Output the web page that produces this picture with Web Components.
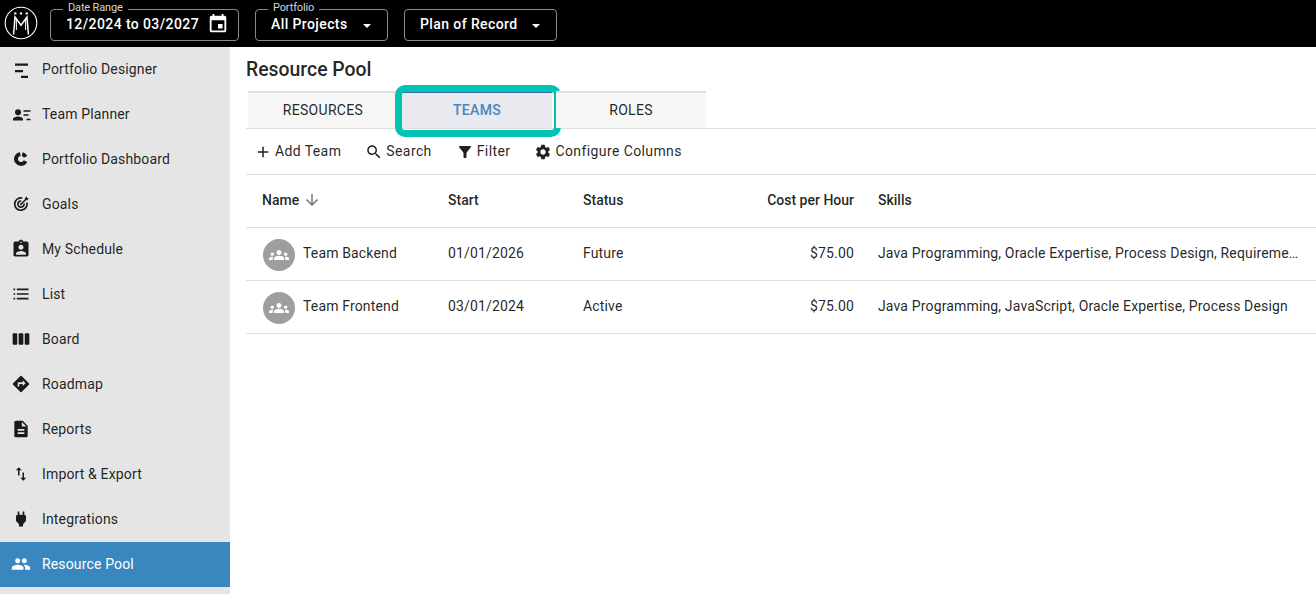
<!DOCTYPE html>
<html lang="en"><head><meta charset="utf-8"><title>Resource Pool</title>
<style>
html,body{margin:0;padding:0;height:594px;overflow:hidden;background:#fff;font-family:Roboto,"Liberation Sans",sans-serif;font-size:14px;color:rgba(0,0,0,.87)}
</style></head><body>
<app-shell>
  <app-header slot="header">
    <field-box label="Date Range" w="189" pr="9.5"><span>12/2024 to 03/2027</span><rp-icon name="event" size="22" slot="end"></rp-icon></field-box>
    <field-box label="Portfolio" w="133" pr="16"><span>All Projects</span><caret-icon slot="end"></caret-icon></field-box>
    <field-box w="153" pr="16"><span>Plan of Record</span><caret-icon slot="end"></caret-icon></field-box>
  </app-header>
  <side-nav slot="nav">
    <nav-item icon="designer" size="24">Portfolio Designer</nav-item>
    <nav-item icon="planner" size="24">Team Planner</nav-item>
    <nav-item icon="donut" size="24">Portfolio Dashboard</nav-item>
    <nav-item icon="goals" size="24">Goals</nav-item>
    <nav-item icon="assign" size="20">My Schedule</nav-item>
    <nav-item icon="list" size="20">List</nav-item>
    <nav-item icon="week" size="20">Board</nav-item>
    <nav-item icon="directions" size="20">Roadmap</nav-item>
    <nav-item icon="description" size="20">Reports</nav-item>
    <nav-item icon="swap" size="18">Import &amp; Export</nav-item>
    <nav-item icon="power" size="20">Integrations</nav-item>
    <nav-item icon="people" size="20" active>Resource Pool</nav-item>
  </side-nav>
  <pool-page slot="main">
    <tab-bar>
      <tab-item>RESOURCES</tab-item>
      <tab-item active>TEAMS</tab-item>
      <tab-item>ROLES</tab-item>
    </tab-bar>
    <tool-bar>
      <tool-btn icon="add">Add Team</tool-btn>
      <tool-btn icon="search">Search</tool-btn>
      <tool-btn icon="filter">Filter</tool-btn>
      <tool-btn icon="settings">Configure Columns</tool-btn>
    </tool-bar>
    <team-table>
      <team-row head>
        <span slot="name" class="n">Name <rp-icon name="down" size="18" color="#757575"></rp-icon></span>
        <span slot="start">Start</span><span slot="status">Status</span><span slot="cost">Cost per Hour</span><span slot="skills">Skills</span>
      </team-row>
      <team-row avatar>
        <span slot="name">Team Backend</span><span slot="start">01/01/2026</span><span slot="status">Future</span><span slot="cost">$75.00</span><span slot="skills">Java Programming, Oracle Expertise, Process Design, Requirements Engineering</span>
      </team-row>
      <team-row avatar>
        <span slot="name">Team Frontend</span><span slot="start">03/01/2024</span><span slot="status">Active</span><span slot="cost">$75.00</span><span slot="skills">Java Programming, JavaScript, Oracle Expertise, Process Design</span>
      </team-row>
    </team-table>
  </pool-page>
</app-shell>
<script>
const P={
event:'<path d="M17 12h-5v5h5v-5zM16 1v2H8V1H6v2H5c-1.11 0-1.99.9-1.99 2L3 19c0 1.1.89 2 2 2h14c1.1 0 2-.9 2-2V5c0-1.1-.9-2-2-2h-1V1h-2zm3 18H5V8h14v11z"/>',
designer:'<path d="M6 6.600h13v2.200H6zM6 13h8v2.200H6zM12 18.700h7v2.200h-7z"/>',
planner:'<circle cx="9" cy="10.300" r="3"/><path d="M4 18.500v-1.200c0-1.800 3.200-2.800 5-2.800s5 1 5 2.800v1.200zM14.500 8.300h7v1.500h-7zM14.500 12.300h5v1.500h-5zM17.500 16.800h4v1.500h-4z"/>',
donut:'<g fill="none" stroke="currentColor" stroke-width="3.800"><path d="M16.530 14.110A5 5 0 1 1 11.300 7.050"/><path d="M13.200 7.150A5 5 0 0 1 16.530 9.890"/></g>',
goals:'<g fill="none" stroke="currentColor" stroke-width="1.700"><path d="M17.900 10.400A6.200 6.200 0 1 1 13.300 6"/><path d="M15 11.500A3.100 3.100 0 1 1 12.300 9"/><path d="M12 12.200 17.200 7" stroke-width="1.500"/></g><path d="M15.700 6.500 17.700 4.300l.4 1.700 1.800.4-2.200 2z"/><circle cx="12" cy="12.200" r="1"/>',
assign:'<path d="M19 3h-4.180C14.400 1.840 13.300 1 12 1c-1.300 0-2.400.84-2.820 2H5c-1.100 0-2 .9-2 2v14c0 1.100.9 2 2 2h14c1.100 0 2-.9 2-2V5c0-1.100-.9-2-2-2zm-7 0c.55 0 1 .45 1 1s-.45 1-1 1-1-.45-1-1 .45-1 1-1zm0 4c1.660 0 3 1.340 3 3s-1.340 3-3 3-3-1.340-3-3 1.340-3 3-3zm6 12H6v-1.400c0-2 4-3.100 6-3.100s6 1.100 6 3.100V19z"/>',
list:'<path d="M3 5.500h2v2H3zM3 11h2v2H3zM3 16.500h2v2H3zM7 5.500h14v2H7zM7 11h14v2H7zM7 16.500h14v2H7z"/>',
week:'<rect x="2" y="5" width="5.500" height="14" rx="1.200"/><rect x="9.200" y="5" width="5.600" height="14" rx="1.200"/><rect x="16.500" y="5" width="5.500" height="14" rx="1.200"/>',
directions:'<path d="M21.710 11.290l-9-9c-.39-.39-1.020-.39-1.410 0l-9 9c-.39.39-.39 1.020 0 1.410l9 9c.39.39 1.020.39 1.410 0l9-9c.39-.38.39-1.010 0-1.410zM14 14.500V12h-4v3H8v-4c0-.55.45-1 1-1h5V7.500l3.500 3.500-3.500 3.500z"/>',
description:'<path d="M14 2H6c-1.100 0-1.990.9-1.990 2L4 20c0 1.100.89 2 2 2h12c1.100 0 2-.9 2-2V8l-6-6zm2 16H8v-2h8v2zm0-4H8v-2h8v2zm-3-5V3.500L18.500 9H13z"/>',
swap:'<path d="M9 3L5 6.990h3V14h2V6.990h3L9 3zm7 14.010V10h-2v7.010h-3L15 21l4-3.990h-3z"/>',
power:'<path d="M16.010 7L16 3h-2v4h-4V3H8v4h-.01C7 6.990 6 7.990 6 8.990v5.490L9.500 18v3h5v-3l3.500-3.510v-5.500c0-1-1-2-1.990-1.990z"/>',
people:'<path d="M16 11c1.660 0 2.990-1.340 2.990-3S17.660 5 16 5c-1.660 0-3 1.340-3 3s1.340 3 3 3zm-8 0c1.660 0 2.990-1.340 2.990-3S9.660 5 8 5C6.340 5 5 6.340 5 8s1.340 3 3 3zm0 2c-2.330 0-7 1.170-7 3.500V19h14v-2.500c0-2.330-4.670-3.500-7-3.500zm8 0c-.29 0-.62.02-.97.05 1.160.84 1.970 1.970 1.970 3.450V19h6v-2.500c0-2.330-4.670-3.500-7-3.500z"/>',
groups:'<path d="M12 12.750c1.630 0 3.070.39 4.240.9 1.080.48 1.760 1.560 1.760 2.730V18H6v-1.610c0-1.180.68-2.260 1.760-2.730 1.170-.52 2.610-.91 4.240-.91zM4 13c1.100 0 2-.9 2-2s-.9-2-2-2-2 .9-2 2 .9 2 2 2zm1.130 1.100c-.37-.06-.74-.1-1.130-.1-.99 0-1.930.21-2.780.58C.48 14.900 0 15.620 0 16.430V18h4.500v-1.610c0-.83.23-1.610.63-2.290zM20 13c1.100 0 2-.9 2-2s-.9-2-2-2-2 .9-2 2 .9 2 2 2zm4 3.430c0-.81-.48-1.530-1.220-1.850-.85-.37-1.790-.58-2.780-.58-.39 0-.76.04-1.130.1.4.68.63 1.460.63 2.290V18H24v-1.570zM12 6c1.660 0 3 1.340 3 3s-1.340 3-3 3-3-1.340-3-3 1.340-3 3-3z"/>',
add:'<path d="M19 13h-6v6h-2v-6H5v-2h6V5h2v6h6v2z"/>',
search:'<path d="M15.500 14h-.79l-.28-.27C15.410 12.590 16 11.110 16 9.500 16 5.910 13.090 3 9.500 3S3 5.910 3 9.500 5.910 16 9.500 16c1.610 0 3.090-.59 4.230-1.570l.27.28v.79l5 4.990L20.490 19l-4.990-5zm-6 0C7.010 14 5 11.990 5 9.500S7.010 5 9.500 5 14 7.010 14 9.500 11.990 14 9.500 14z"/>',
filter:'<path d="M4.250 5.610C6.270 8.200 10 13 10 13v6c0 .55.45 1 1 1h2c.55 0 1-.45 1-1v-6s3.720-4.800 5.740-7.390c.51-.66.04-1.610-.79-1.610H5.040c-.83 0-1.300.95-.79 1.610z"/>',
settings:'<path d="M19.140 12.940c.04-.3.06-.61.06-.94 0-.32-.02-.64-.07-.94l2.030-1.580c.18-.14.23-.41.12-.61l-1.920-3.320c-.12-.22-.37-.29-.59-.22l-2.390.96c-.5-.38-1.030-.7-1.620-.94l-.36-2.540c-.04-.24-.24-.41-.48-.41h-3.840c-.24 0-.43.17-.47.41l-.36 2.540c-.59.24-1.130.57-1.620.94l-2.390-.96c-.22-.08-.47 0-.59.22L2.740 8.870c-.12.21-.08.47.12.61l2.030 1.580c-.05.3-.09.63-.09.94s.02.64.07.94l-2.030 1.580c-.18.14-.23.41-.12.61l1.920 3.320c.12.22.37.29.59.22l2.390-.96c.5.38 1.030.7 1.620.94l.36 2.540c.05.24.24.41.48.41h3.840c.24 0 .44-.17.47-.41l.36-2.540c.59-.24 1.130-.56 1.620-.94l2.390.96c.22.08.47 0 .59-.22l1.920-3.320c.12-.22.07-.47-.12-.61l-2.010-1.580zM12 15.600c-1.980 0-3.600-1.620-3.600-3.600s1.620-3.600 3.600-3.600 3.600 1.620 3.600 3.600-1.620 3.600-3.600 3.600z"/>',
down:'<path d="M20 12l-1.410-1.410L13 16.170V4h-2v12.170l-5.580-5.590L4 12l8 8 8-8z"/>'
};
function def(tag,html,init){customElements.define(tag,class extends HTMLElement{constructor(){super();this.attachShadow({mode:'open'})}connectedCallback(){this.shadowRoot.innerHTML=typeof html==='function'?html(this):html;init&&init(this)}})}
class RpIcon extends HTMLElement{connectedCallback(){const s=this.getAttribute('size')||20,c=this.getAttribute('color')||'currentColor';
 if(!this.shadowRoot)this.attachShadow({mode:'open'});
 this.shadowRoot.innerHTML=`<style>:host{display:inline-flex;width:${s}px;height:${s}px;flex:none;color:${c}}svg{width:100%;height:100%;fill:currentColor;display:block}</style><svg viewBox="0 0 24 24">${P[this.getAttribute('name')]||''}</svg>`}}
customElements.define('rp-icon',RpIcon);
def('caret-icon',`<style>:host{display:inline-block;width:0;height:0;border-left:4.5px solid transparent;border-right:4.5px solid transparent;border-top:4.5px solid #fff;flex:none;margin-top:4px}</style>`);
def('app-shell',`<style>:host{display:grid;grid-template-columns:230px 1fr;grid-template-rows:47px 547px;height:594px;width:1316px;overflow:hidden}
.h{grid-column:1/3}.n{background:#e5e5e5;overflow:hidden}.m{min-width:0;overflow:hidden}</style>
<div class="h"><slot name="header"></slot></div><div class="n"><slot name="nav"></slot></div><div class="m"><slot name="main"></slot></div>`);
def('app-header',`<style>:host{display:flex;align-items:flex-start;height:47px;background:#000;color:#fff;padding:9px 0 0 50px;gap:16px;box-sizing:border-box;position:relative}
svg{position:absolute;left:4px;top:6px;width:34px;height:34px}</style>
<svg viewBox="0 0 34 34" fill="none" stroke="#fff"><circle cx="17" cy="17" r="15.800" stroke-width="1.100"/>
<path d="M9.600 28.500 11 11 17 19.200 23 11 24.400 28.500" stroke-width="1.500"/><path d="M12.400 12v12M21.600 12v12" stroke-width="1"/>
<g fill="#fff" stroke="none"><circle cx="11.300" cy="7.400" r="1.200"/><circle cx="17" cy="7.400" r="1.200"/><circle cx="22.700" cy="7.400" r="1.200"/></g></svg><slot></slot>`);
def('field-box',el=>{const l=el.getAttribute('label');return `<style>:host{display:flex;align-items:center;justify-content:space-between;box-sizing:border-box;width:${el.getAttribute('w')}px;height:32px;border:1px solid #8a8a8a;border-radius:4px;padding:0 ${el.getAttribute('pr')}px 2px 15px;position:relative;font:500 14px Roboto,sans-serif;letter-spacing:.4px;color:#fff}
.l{position:absolute;left:12px;top:-9px;background:#000;padding:0 5px;font:400 11px/14px Roboto,sans-serif;letter-spacing:-.15px;color:#d6d6d6}</style>${l?`<span class="l">${l}</span>`:''}<slot></slot><slot name="end"></slot>`});
def('side-nav',`<style>:host{display:block}</style><slot></slot>`);
def('nav-item',el=>{const a=el.hasAttribute('active');return `<style>:host{display:flex;align-items:center;box-sizing:border-box;height:45px;padding-bottom:2px;color:${a?'#fff':'rgba(0,0,0,.87)'};background:${a?'#3a87c0':'transparent'};font:400 14px Roboto,sans-serif;letter-spacing:.15px}
.i{width:42px;display:flex;justify-content:center;box-sizing:border-box;color:${a?'#fff':'#1a1a1a'}}</style><span class="i"><rp-icon name="${el.getAttribute('icon')}" size="${el.getAttribute('size')||20}"></rp-icon></span><slot></slot>`});
def('pool-page',`<style>:host{display:block}h1{margin:0;padding:0 0 0 16px;height:44px;font:500 19.400px/46px Roboto,sans-serif;color:rgba(0,0,0,.87)}</style><h1>Resource Pool</h1><slot></slot>`);
def('tab-bar',`<style>:host{display:flex;gap:4px;height:38px;box-sizing:border-box;border-bottom:1px solid #e0e0e0;margin-left:16px;padding-left:2px}</style><slot></slot>`);
def('tab-item',el=>{const a=el.hasAttribute('active');return `<style>:host{display:flex;align-items:center;justify-content:center;width:150px;height:37px;box-sizing:border-box;padding-bottom:2px;position:relative;border-top:2px solid ${a?'#3a6fb0':'#e0e0e0'};background:${a?'#e8eaef':'#f7f7f7'};color:${a?'#4a86c0':'rgba(0,0,0,.87)'};font:${a?500:400} 14px Roboto,sans-serif;letter-spacing:.3px}
.o{position:absolute;left:-7px;right:-9px;top:-8px;bottom:-9px;border:7px solid #00c4b0;border-radius:10px;pointer-events:none}</style><slot></slot>${a?'<span class="o"></span>':''}`});
def('tool-bar',`<style>:host{display:flex;align-items:center;height:46px;box-sizing:border-box;border-bottom:1px solid #e0e0e0;margin-left:16px;padding-left:8px;gap:24px}</style><slot></slot>`);
def('tool-btn',el=>`<style>:host{display:inline-flex;align-items:center;gap:3px;font:400 14px Roboto,sans-serif;letter-spacing:.4px;color:rgba(0,0,0,.87)}.t{padding-bottom:2px}</style><rp-icon name="${el.getAttribute('icon')}" size="18"></rp-icon><span class="t"><slot></slot></span>`);
def('team-table',`<style>:host{display:block;margin-left:16px}</style><slot></slot>`);
def('team-row',el=>{const h=el.hasAttribute('head'),av=el.hasAttribute('avatar');return `<style>:host{display:grid;grid-template-columns:186px 135px 135px 136px 1fr;align-items:center;height:53px;box-sizing:border-box;border-bottom:1px solid #e0e0e0;font:${h?500:400} 14px Roboto,sans-serif;letter-spacing:${h?0:.15}px;color:rgba(0,0,0,.87);padding-left:16px}
.c{padding-bottom:2px}.name{display:flex;align-items:center;gap:8px}.av{width:32px;height:32px;border-radius:50%;background:#9e9e9e;display:flex;align-items:center;justify-content:center;margin:2px 0 0 1px;color:#fff}
.cost{text-align:right}.sk{padding-left:24px;padding-right:16px;white-space:nowrap;overflow:hidden;text-overflow:ellipsis;min-width:0}::slotted(.n){display:inline-flex;align-items:center;gap:4px}</style>
<div class="name">${av?'<span class="av"><rp-icon name="groups" size="20"></rp-icon></span>':''}<span class="c"><slot name="name"></slot></span></div><div class="c"><slot name="start"></slot></div><div class="c"><slot name="status"></slot></div><div class="c cost"><slot name="cost"></slot></div><div class="c sk"><slot name="skills"></slot></div>`});
</script>
</body></html>
